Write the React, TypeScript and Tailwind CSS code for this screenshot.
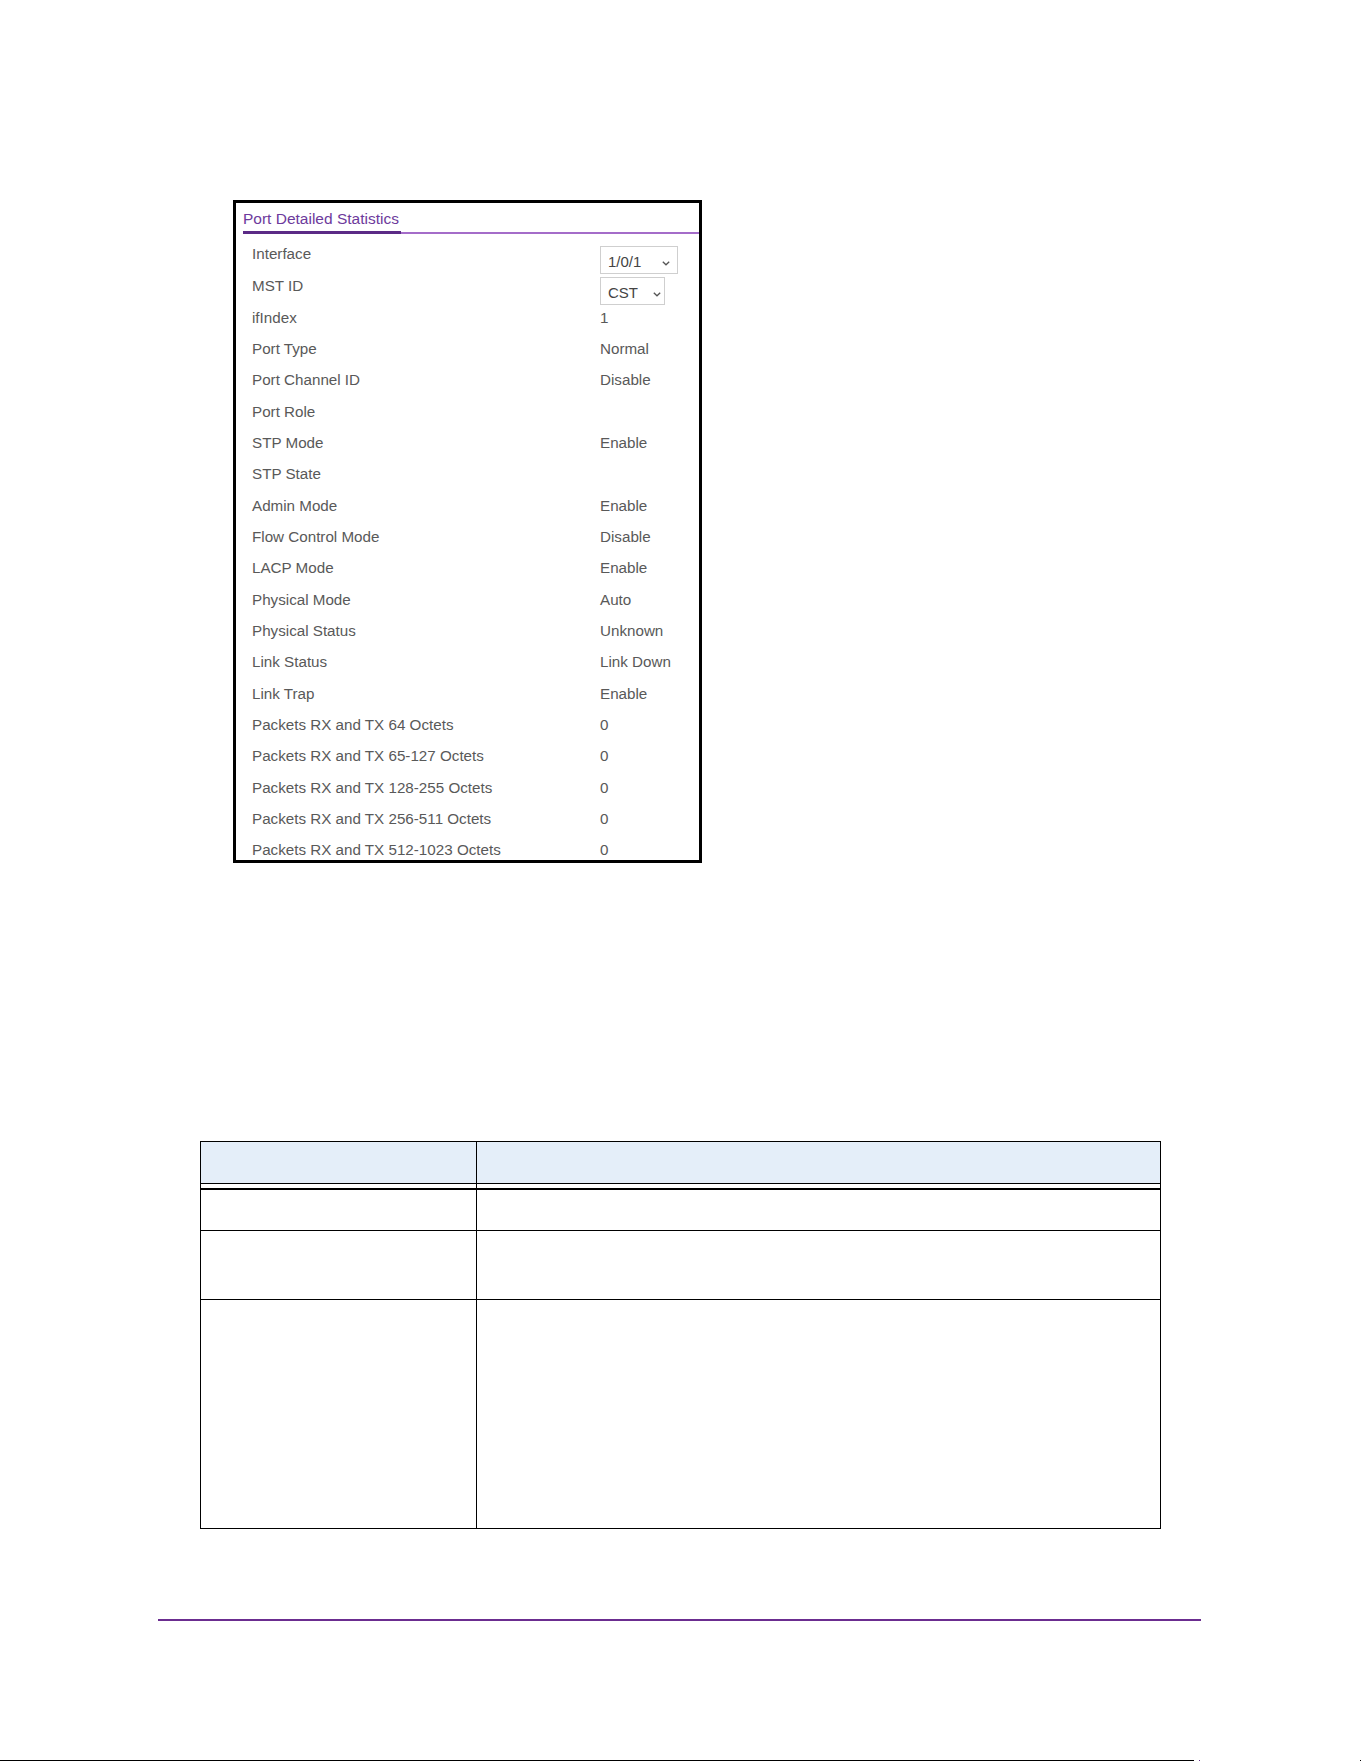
import React from 'react'

type StatRow = { label: string; value: string }

const statRows: StatRow[] = [
  { label: 'Port Type', value: 'Normal' },
  { label: 'Port Channel ID', value: 'Disable' },
  { label: 'Port Role', value: '' },
  { label: 'STP Mode', value: 'Enable' },
  { label: 'STP State', value: '' },
  { label: 'Admin Mode', value: 'Enable' },
  { label: 'Flow Control Mode', value: 'Disable' },
  { label: 'LACP Mode', value: 'Enable' },
  { label: 'Physical Mode', value: 'Auto' },
  { label: 'Physical Status', value: 'Unknown' },
  { label: 'Link Status', value: 'Link Down' },
  { label: 'Link Trap', value: 'Enable' },
  { label: 'Packets RX and TX 64 Octets', value: '0' },
  { label: 'Packets RX and TX 65-127 Octets', value: '0' },
  { label: 'Packets RX and TX 128-255 Octets', value: '0' },
  { label: 'Packets RX and TX 256-511 Octets', value: '0' },
  { label: 'Packets RX and TX 512-1023 Octets', value: '0' },
]

function Chevron() {
  return (
    <svg width="8" height="5" viewBox="0 0 8 5" className="shrink-0">
      <path d="M0.8 0.8 L4 3.8 L7.2 0.8" fill="none" stroke="#555" strokeWidth="1.3" />
    </svg>
  )
}

function FakeSelect({ value, width, chevronGap }: { value: string; width: string; chevronGap: string }) {
  return (
    <div className={`${width} h-[28px] border border-[#cfcfcf] bg-white flex items-center pl-[7px] pt-[5px]`}>
      <span className="text-[15px] leading-[20px] text-[#444] self-start">{value}</span>
      <div className={`ml-auto ${chevronGap} mt-[2px]`}>
        <Chevron />
      </div>
    </div>
  )
}

function PortStatsPanel() {
  return (
    <div className="ml-[233px] w-[469px] h-[663px] border-[3px] border-black bg-white overflow-hidden">
      {/* Tab header */}
      <div className="flex items-end pt-[6px]">
        <div className="w-[7px]" />
        <div className="w-[158px] pb-[2px] border-b-[3px] border-[#5b2a86] text-[15.5px] leading-[20px] text-[#6d3a9c] whitespace-nowrap">
          Port Detailed Statistics
        </div>
        <div className="flex-1 border-b-2 border-[#a46cc9]" />
      </div>

      <div className="mt-[9.5px] pl-[16px] text-[15.2px] leading-[20px] text-[#595959]">
        <div className="flex h-[32px]">
          <div className="w-[348px]">Interface</div>
          <div className="mt-[2.5px]">
            <FakeSelect value="1/0/1" width="w-[78px]" chevronGap="mr-[7px]" />
          </div>
        </div>
        <div className="flex h-[32.2px]">
          <div className="w-[348px]">MST ID</div>
          <div className="mt-[1.5px]">
            <FakeSelect value="CST" width="w-[65px]" chevronGap="mr-[3px]" />
          </div>
        </div>
        <div className="flex h-[31.33px]">
          <div className="w-[348px]">ifIndex</div>
          <div>1</div>
        </div>
        {statRows.map((row) => (
          <div key={row.label} className="flex h-[31.33px]">
            <div className="w-[348px] whitespace-nowrap">{row.label}</div>
            <div className="whitespace-nowrap">{row.value}</div>
          </div>
        ))}
      </div>
    </div>
  )
}

function DescriptionTable() {
  return (
    <div className="ml-[200px] w-[961px] border border-black">
      <div className="flex h-[42px] bg-[#e4eef9] border-b border-black">
        <div className="w-[276px] border-r border-black" />
        <div className="flex-1" />
      </div>
      <div className="flex h-[6px] border-b-2 border-black">
        <div className="w-[276px] border-r border-black" />
        <div className="flex-1" />
      </div>
      <div className="flex h-[41px] border-b border-black">
        <div className="w-[276px] border-r border-black" />
        <div className="flex-1" />
      </div>
      <div className="flex h-[69px] border-b border-black">
        <div className="w-[276px] border-r border-black" />
        <div className="flex-1" />
      </div>
      <div className="flex h-[228px]">
        <div className="w-[276px] border-r border-black" />
        <div className="flex-1" />
      </div>
    </div>
  )
}

export default function App() {
  return (
    <div className="w-[1361px] h-[1761px] bg-white pt-[200px] font-['Liberation_Sans',Arial,sans-serif] overflow-hidden">
      <PortStatsPanel />
      <div className="mt-[278px]">
        <DescriptionTable />
      </div>
      {/* Footer rule */}
      <div className="mt-[90px] ml-[158px] w-[1043px] h-[2px] bg-[#6b2d90]" />
      <div className="mt-[139px] flex items-end">
        <div className="w-[1194px] h-[1px] bg-black" />
        <div className="ml-[5px] w-[1px] h-[1px] bg-[#6b2d90]" />
        <div className="ml-[160px] w-[1px] h-[1px] bg-black" />
      </div>
    </div>
  )
}
